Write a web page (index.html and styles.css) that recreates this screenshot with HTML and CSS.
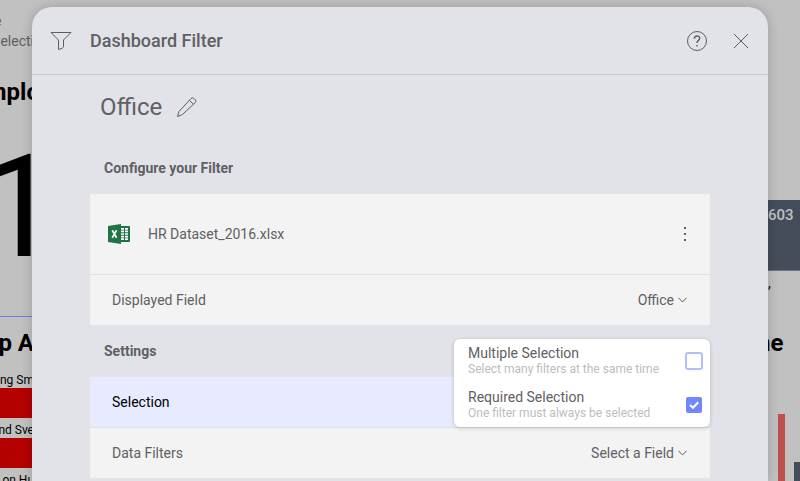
FILE: index.html
```html
<!DOCTYPE html>
<html lang="en">
<head>
<meta charset="utf-8">
<meta name="viewport" content="width=device-width, initial-scale=1">
<title>Dashboard Filter</title>
<link rel="stylesheet" href="styles.css">
</head>
<body>
<main class="dashboard">
  <section class="pane pane-left">
    <p class="crumb">e</p>
    <p class="note">Selecti</p>
    <h2 class="widget-title widget-title-wide">Emplo</h2>
    <p class="metric">1</p>
    <h2 class="widget-title widget-title-top">Top A</h2>
    <p class="bar-label">ing Sm</p>
    <div class="bar"></div>
    <p class="bar-label">nd Sve</p>
    <div class="bar"></div>
    <p class="bar-label">on Hu</p>
  </section>
  <section class="pane pane-right">
    <div class="tile">603</div>
    <p class="tile-note">,</p>
    <h2 class="widget-title widget-title-end">ne</h2>
    <div class="columns">
      <span class="column column-red"></span>
      <span class="column column-slate"></span>
    </div>
  </section>
</main>

<div class="dialog" role="dialog" aria-labelledby="dialog-title">
  <header class="dialog-header">
    <svg class="funnel" width="22" height="20" viewBox="0 0 22 20" aria-hidden="true"><path d="M1 1.5H21L13.5 9V16Q13 17.5 8.5 18.5V9Z"/></svg>
    <h1 class="dialog-title" id="dialog-title">Dashboard Filter</h1>
    <button class="icon-button" type="button" aria-label="Help">
      <svg width="22" height="22" viewBox="0 0 22 22"><circle cx="11" cy="11" r="9.5"/><path class="question" d="M8.4 8.7C8.4 5.1 13.7 5.1 13.7 8.3C13.7 10.5 11 10.3 11 13"/><path class="question" d="M11 14.9V16.5"/></svg>
    </button>
    <button class="icon-button" type="button" aria-label="Close">
      <svg width="22" height="22" viewBox="0 0 22 22"><path d="M4 4L18 18M18 4L4 18"/></svg>
    </button>
  </header>

  <div class="dialog-body">
    <div class="name-row">
      <h2 class="filter-name">Office</h2>
      <button class="icon-button" type="button" aria-label="Rename">
        <svg width="22" height="22" viewBox="0 0 22 22"><path d="M1.5 20.5L3 15.5L15 2.5Q16.5 1 18 2.5L19.5 4Q20.5 5.2 19.5 6.3L6.5 18.5ZM13.5 4.5L17.5 8.3"/></svg>
      </button>
    </div>

    <h3 class="section-title">Configure your Filter</h3>
    <div class="card">
      <div class="row row-file">
        <svg class="excel" width="22" height="20" viewBox="0 0 22 20" aria-hidden="true">
          <rect x="11" y="2" width="11" height="16" rx="1" fill="#217346" stroke="none"/>
          <path d="M13 4.8H16M17 4.8H20M13 7.4H16M17 7.4H20M13 10H16M17 10H20M13 12.6H16M17 12.6H20M13 15.2H16M17 15.2H20" stroke="#fff" stroke-width="1.7"/>
          <path d="M0 2L13 0V20L0 18Z" fill="#217346" stroke="none"/>
          <path d="M4.2 6.3L8.6 13.7M8.6 6.3L4.2 13.7" stroke="#fff" stroke-width="1.7"/>
        </svg>
        <span class="file-name">HR Dataset_2016.xlsx</span>
        <button class="icon-button more" type="button" aria-label="More options">
          <svg width="6" height="16" viewBox="0 0 6 16"><rect x="2" y="1" width="2" height="2"/><rect x="2" y="7" width="2" height="2"/><rect x="2" y="13" width="2" height="2"/></svg>
        </button>
      </div>
      <div class="row">
        <label for="field">Displayed Field</label>
        <span class="picker">
          <select id="field"><option>Office</option></select>
          <svg width="10" height="6" viewBox="0 0 10 6" aria-hidden="true"><path d="M.5 .8L4.5 5L8.5 .8"/></svg>
        </span>
      </div>
    </div>

    <h3 class="section-title">Settings</h3>
    <div class="card">
      <div class="row row-selected">
        <span>Selection</span>
        <div class="menu">
          <label class="option">
            <span class="option-text"><span class="option-name">Multiple Selection</span><span class="option-hint">Select many filters at the same time</span></span>
            <input type="checkbox">
          </label>
          <label class="option">
            <span class="option-text"><span class="option-name">Required Selection</span><span class="option-hint">One filter must always be selected</span></span>
            <span class="tick-box"><input type="checkbox" checked><svg class="tick" width="10" height="8" viewBox="0 0 10 8" aria-hidden="true"><path d="M1 4L4 6.8L9.2 1.2"/></svg></span>
          </label>
        </div>
      </div>
      <div class="row">
        <label for="data-filter">Data Filters</label>
        <span class="picker">
          <select id="data-filter"><option>Select a Field</option></select>
          <svg width="10" height="6" viewBox="0 0 10 6" aria-hidden="true"><path d="M.5 .8L4.5 5L8.5 .8"/></svg>
        </span>
      </div>
    </div>
  </div>
</div>
</body>
</html>
```
FILE: styles.css
```css
* { box-sizing: border-box; }

body {
  margin: 0;
  min-height: 100vh;
  overflow: hidden;
  background: #c1c1c1;
  color: #5f6063;
  font: 14px/20px Roboto, sans-serif;
}

h1, h2, h3, p { margin: 0; }

svg { display: block; fill: none; stroke: #5c5d62; stroke-width: 1; }

/* Dashboard behind the dialog */
.dashboard {
  display: flex;
  justify-content: space-between;
  height: 100vh;
  overflow: hidden;
}

.pane {
  display: flex;
  flex-direction: column;
  width: 32px;
  overflow: hidden;
  white-space: nowrap;
}

.pane-left { width: 40px; align-items: flex-end; padding: 11px 6px 0 0; }
.pane-left > * { flex: none; }
.crumb { align-self: flex-start; margin-left: -6px; }

.widget-title {
  color: #000;
  font-size: 24px;
  font-weight: 700;
  line-height: 32px;
}

.pane-left .widget-title-wide { margin: 25px -6px 0 0; }

.metric {
  width: 54px;
  height: 209px;
  padding-top: 38px;
  border-bottom: 1px solid #6b80dc;
  color: #000;
  font-size: 142px;
  line-height: 124px;
}

.widget-title-top { margin-top: 10px; }
.widget-title-top + .bar-label { margin-top: 13px; }

.bar-label { color: #000; font-size: 12px; line-height: 16px; }
.bar { width: 100%; height: 30px; margin-bottom: 4px; background: #b50000; }

.pane-right { padding-top: 200px; }

.tile {
  height: 71px;
  padding-top: 5px;
  border-bottom: 1px solid #6b7586;
  background: #454d5a;
  color: #c1c1c1;
  font-size: 15px;
  font-weight: 500;
}

.tile-note { margin-top: 2px; color: #000; }
.widget-title-end { margin: 34px 0 0 -11px; }

.columns {
  display: flex;
  flex: 1;
  align-items: flex-end;
  gap: 9px;
  padding-left: 10px;
}

.column { flex: none; width: 7px; }
.column-red { height: 67px; background: #c05050; }
.column-slate { height: 19px; background: #454d5a; }

/* Dialog */
.dialog {
  position: absolute;
  inset: 7px 32px 0;
  overflow: hidden;
  border-radius: 20px 20px 0 0;
  background: #e2e3e9;
  box-shadow: 0 0 12px rgb(0 0 0 / 20%);
}

.dialog-header {
  display: flex;
  align-items: center;
  height: 68px;
  padding: 0 16px 0 18px;
  border-bottom: 1px solid #c9cad1;
}

.dialog-title {
  flex: 1;
  margin-left: 18px;
  font-size: 18px;
  font-weight: 500;
}

.icon-button { padding: 0; border: 0; background: none; }
.icon-button + .icon-button { margin-left: 22px; }
.question { stroke-width: 1.4; }

.dialog-body { padding: 0 58px; }

.name-row {
  display: flex;
  align-items: center;
  gap: 14px;
  height: 64px;
  padding-left: 10px;
}

.filter-name { font-size: 24px; font-weight: 400; line-height: 32px; }

.section-title {
  padding: 16px 14px;
  font-size: 14px;
  font-weight: 700;
}

.name-row + .section-title { padding-top: 19px; }

.card { background: #f3f3f3; }

.row {
  position: relative;
  display: flex;
  align-items: center;
  justify-content: space-between;
  height: 50px;
  padding: 0 22px;
}

.row + .row { height: 51px; border-top: 1px solid #dfe0e6; }
.row-file { height: 80px; padding: 0 22px 0 18px; }
.file-name { flex: 1; margin-left: 18px; }
.more svg { fill: #5c5d62; stroke: none; }
.row-selected { background: #e8ebff; color: #000; }

.picker { display: flex; align-items: center; gap: 4px; }

select {
  appearance: none;
  field-sizing: content;
  padding: 0;
  border: 0;
  background: none;
  color: inherit;
  font: inherit;
}

/* Selection menu */
.menu {
  position: absolute;
  right: 0;
  bottom: 0;
  z-index: 1;
  width: 256px;
  border-radius: 6px;
  background: #fff;
  box-shadow: 0 1px 4px rgb(0 0 0 / 20%);
  color: #5f6063;
}

.option {
  display: flex;
  align-items: center;
  justify-content: space-between;
  height: 44px;
  padding: 0 7px 0 14px;
}

.option-text { display: grid; }
.option-name { line-height: 16px; }
.option-hint { color: #bdbdbd; font-size: 12px; line-height: 16px; }

input {
  appearance: none;
  display: block;
  width: 18px;
  height: 18px;
  margin: 0;
  border: 2px solid #b3beff;
  border-radius: 3px;
}

input:checked { width: 16px; height: 16px; margin: 1px; border: 0; border-radius: 2px; background: #7087ff; }

.tick-box { display: grid; place-items: center; }
.tick-box > * { grid-area: 1 / 1; }
.tick { stroke: #fff; stroke-width: 2; }
```
